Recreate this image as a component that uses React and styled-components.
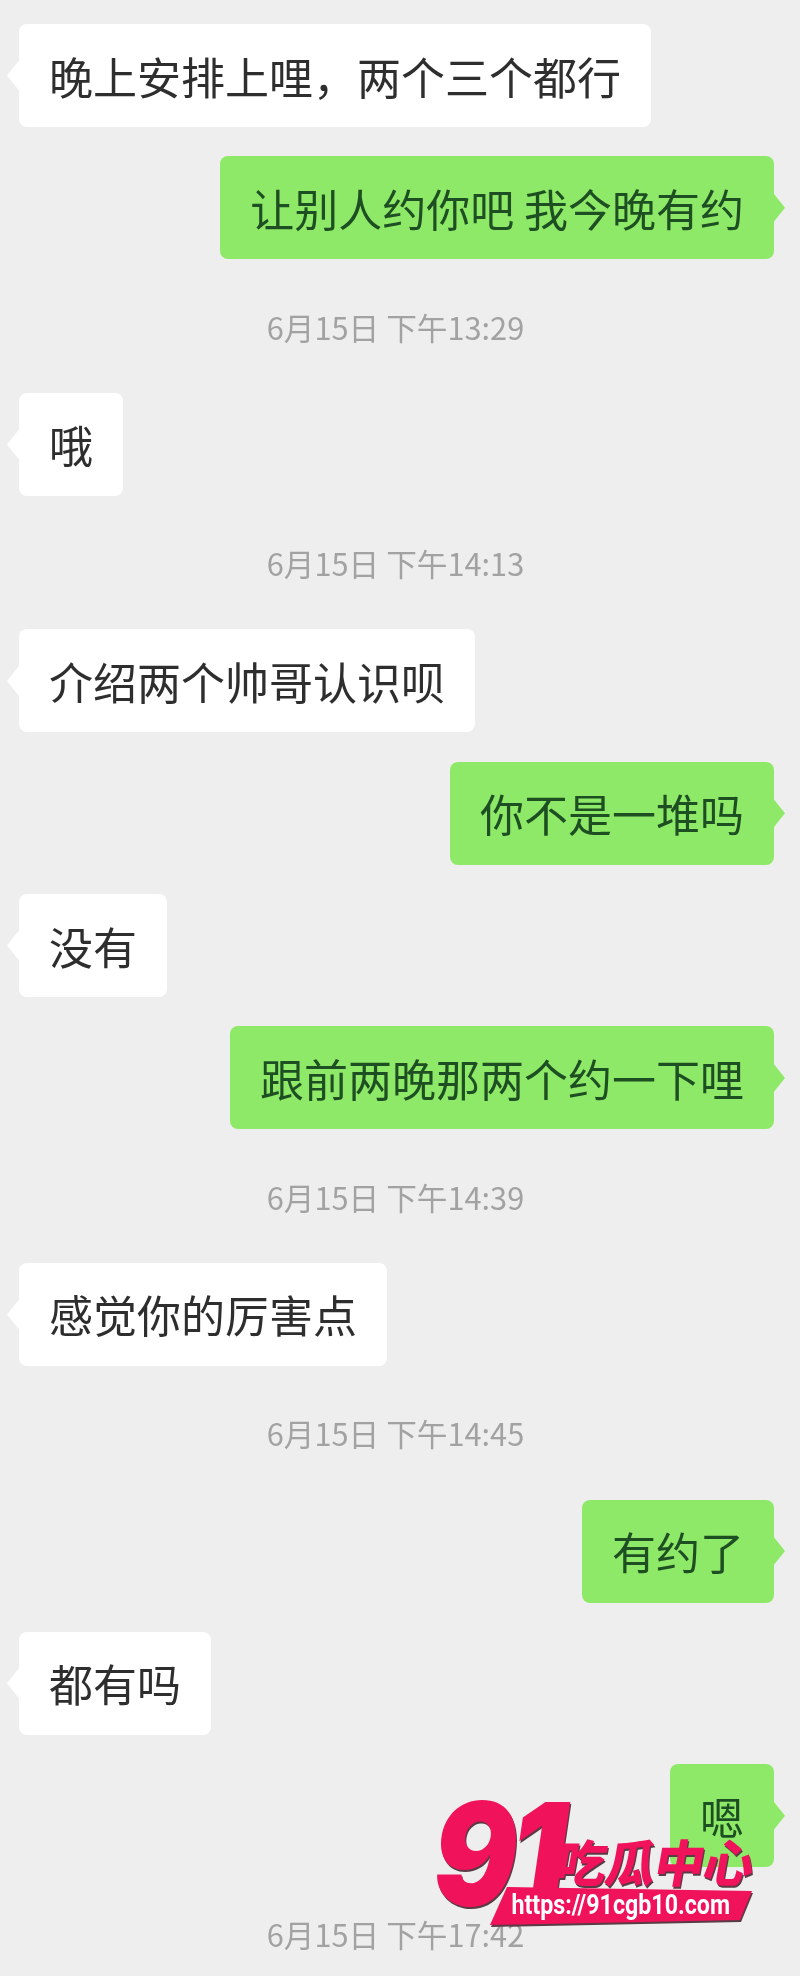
import React from 'react'
import styled, { createGlobalStyle } from 'styled-components'

const messages = [
  { from: 'them', text: '晚上安排上哩，两个三个都行' },
  { from: 'me', text: '让别人约你吧 我今晚有约' },
  { time: '6月15日 下午13:29' },
  { from: 'them', text: '哦' },
  { time: '6月15日 下午14:13' },
  { from: 'them', text: '介绍两个帅哥认识呗' },
  { from: 'me', text: '你不是一堆吗' },
  { from: 'them', text: '没有' },
  { from: 'me', text: '跟前两晚那两个约一下哩' },
  { time: '6月15日 下午14:39' },
  { from: 'them', text: '感觉你的厉害点' },
  { time: '6月15日 下午14:45' },
  { from: 'me', text: '有约了' },
  { from: 'them', text: '都有吗' },
  { from: 'me', text: '嗯' },
  { time: '6月15日 下午17:42' },
]

export default function App() {
  return (
    <Screen>
      <GlobalStyle />
      <Chat>
        {messages.map((m, i) =>
          m.time ? (
            <TimeRow key={i}>{m.time}</TimeRow>
          ) : (
            <Row key={i} $mine={m.from === 'me'}>
              <Bubble $mine={m.from === 'me'}>
                <BubbleText $mine={m.from === 'me'}>{m.text}</BubbleText>
              </Bubble>
            </Row>
          )
        )}
      </Chat>
      <Stamp>
        <StampHead>
          <Digits>91</Digits>
          <StampTitle>吃瓜中心</StampTitle>
        </StampHead>
        <StampBand>
          <StampUrl>https://91cgb10.com</StampUrl>
        </StampBand>
      </Stamp>
    </Screen>
  )
}

const GlobalStyle = createGlobalStyle`
  html, body {
    margin: 0;
    padding: 0;
    background: #eeeeee;
  }
`

const Screen = styled.div`
  position: relative;
  width: 800px;
  height: 1976px;
  overflow: hidden;
  background: #eeeeee;
  font-family: "Noto Sans CJK SC", "Noto Sans", sans-serif;
`

const Chat = styled.div`
  display: flex;
  flex-direction: column;
  gap: 29.3px;
  padding: 24px 26px 0 19px;
`

const Row = styled.div`
  display: flex;
  justify-content: ${p => (p.$mine ? 'flex-end' : 'flex-start')};
`

const Bubble = styled.div`
  position: relative;
  display: flex;
  align-items: center;
  height: 103px;
  padding: 0 30px;
  border-radius: 8px;
  background: ${p => (p.$mine ? '#8fe968' : '#ffffff')};

  &::before {
    content: '';
    position: absolute;
    top: 50%;
    ${p => (p.$mine ? 'right: -11px;' : 'left: -12px;')}
    width: 12px;
    height: 30px;
    margin-top: -15px;
    background: inherit;
    clip-path: ${p =>
      p.$mine
        ? 'polygon(0 0, 100% 50%, 0 100%)'
        : 'polygon(100% 0, 0 50%, 100% 100%)'};
  }
`

const BubbleText = styled.span`
  font-size: 44px;
  line-height: 1;
  white-space: pre;
  color: ${p => (p.$mine ? '#1e4f22' : '#2e2e2e')};
  filter: blur(0.6px);
`

const TimeRow = styled.div`
  display: flex;
  align-items: center;
  justify-content: center;
  height: 75px;
  padding-right: 2px;
  font-size: 30.7px;
  color: #a2a2a2;
  filter: blur(0.7px);
`

const Stamp = styled.div`
  position: absolute;
  right: 43px;
  top: 1802px;
  display: flex;
  flex-direction: column;
  width: 320px;
  filter: drop-shadow(1px 2px 0 #5a3a44);
`

const StampHead = styled.div`
  display: flex;
  align-items: flex-end;
  height: 83px;
`

const Digits = styled.span`
  flex: none;
  align-self: flex-start;
  width: 125px;
  height: 83px;
  margin-left: -4px;
  font-family: Inter, sans-serif;
  font-weight: 900;
  font-style: italic;
  font-size: 142px;
  line-height: 103px;
  letter-spacing: -8px;
  color: #f0125a;
  transform: scaleX(0.88);
  transform-origin: left top;
`

const StampTitle = styled.span`
  font-weight: 900;
  font-size: 50px;
  line-height: 50px;
  letter-spacing: -1px;
  white-space: nowrap;
  color: #f0125a;
  transform: skewX(-10deg);
`

const StampBand = styled.div`
  display: flex;
  align-items: center;
  justify-content: center;
  height: 40px;
  margin-left: 53px;
  width: 262px;
  background: #f0125a;
  clip-path: polygon(17px 2px, 100% 6px, 250px 35px, 0 100%);
`

const StampUrl = styled.span`
  font-family: Roboto, sans-serif;
  font-weight: 700;
  font-size: 28px;
  line-height: 36px;
  white-space: nowrap;
  color: #ffffff;
  transform: scaleX(0.83);
  filter: blur(0.4px);
`
